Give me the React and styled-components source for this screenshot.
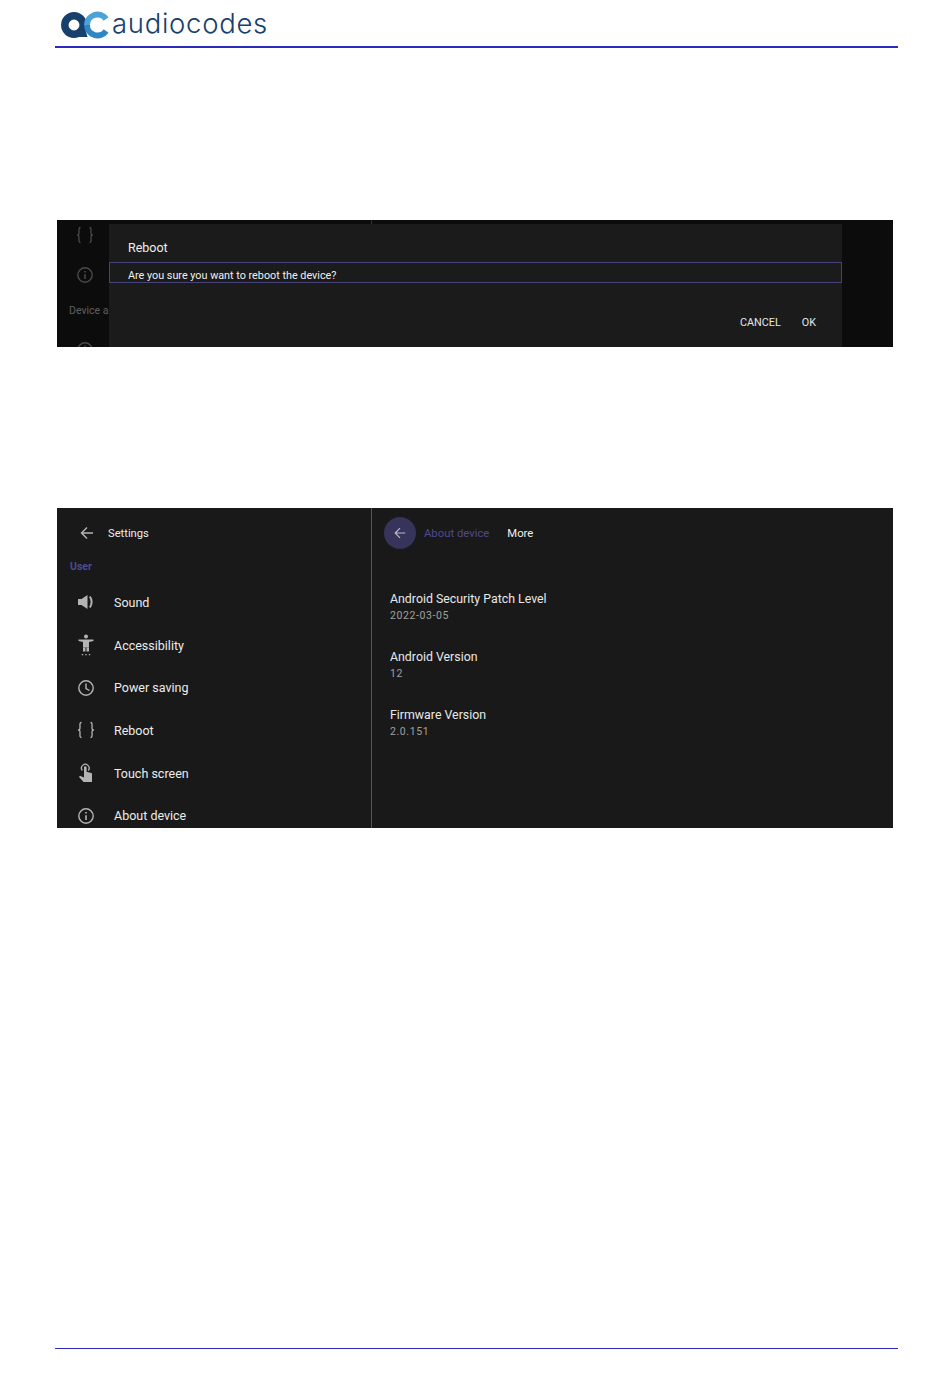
import React from "react";
import styled, { createGlobalStyle } from "styled-components";

const GlobalStyle = createGlobalStyle`
  html, body {
    margin: 0;
    padding: 0;
    background: #fff;
  }
  body {
    font-family: Roboto, "Liberation Sans", sans-serif;
  }
`;

const Page = styled.div`
  width: 950px;
  height: 1378px;
  display: flex;
  flex-direction: column;
  overflow: hidden;
`;

const Header = styled.header`
  height: 48px;
  margin: 0 52px 0 55px;
  padding: 0 0 0 6px;
  box-sizing: border-box;
  border-bottom: 2px solid #2a2ac0;
  display: flex;
  align-items: flex-start;
  gap: 3px;
`;

const LogoMark = styled.svg`
  width: 48px;
  height: 28px;
  margin-top: 11px;
  flex: none;
`;

const LogoText = styled.span`
  font-family: Inter, sans-serif;
  font-weight: 300;
  font-size: 27.5px;
  letter-spacing: 0.7px;
  line-height: 24px;
  margin-top: 11px;
  color: #17406d;
`;

const Shot = styled.section`
  width: 836px;
  margin: ${(p) => p.$top}px 0 0 57px;
  height: ${(p) => p.$height}px;
  background: ${(p) => (p.$dim ? "#0c0c0c" : "#191919")};
  color: #e8e8e8;
  display: flex;
  overflow: hidden;
`;

const Backdrop = styled.div`
  flex: none;
  width: ${(p) => p.$width}px;
  background: #0c0c0c;
`;

const DimColumn = styled.div`
  height: 100%;
  display: flex;
  flex-direction: column;
  align-items: flex-start;
  padding-left: 12px;
  box-sizing: border-box;
`;

const DimIcon = styled.div`
  width: 32px;
  margin-top: ${(p) => p.$top}px;
  display: flex;
  justify-content: center;
  color: #4a4a4a;
`;

const DimLabel = styled.div`
  font-size: 10.5px;
  line-height: 12px;
  margin-top: 21px;
  white-space: nowrap;
  color: #606060;
`;

const Dialog = styled.div`
  flex: none;
  width: 733px;
  display: flex;
  flex-direction: column;
  margin-top: 4px;
  background: #1b1b1b;
  position: relative;

  &::before {
    content: "";
    position: absolute;
    top: -4px;
    left: 262px;
    width: 1px;
    height: 4px;
    background: #333;
  }
`;

const DialogTitle = styled.div`
  font-size: 12.5px;
  line-height: 16px;
  margin: 16px 0 0 19px;
  color: #eee;
`;

const FocusRow = styled.div`
  height: 21px;
  margin-top: 6px;
  box-sizing: border-box;
  border: 1px solid #46437a;
  padding: 6px 0 0 18px;
  font-size: 10.8px;
  line-height: 13px;
  color: #f0f0f0;
  white-space: nowrap;
  overflow: hidden;
`;

const DialogActions = styled.div`
  display: flex;
  justify-content: flex-end;
  gap: 21px;
  padding-right: 26px;
  margin-top: 33px;
`;

const ActionButton = styled.span`
  font-size: 10.8px;
  line-height: 13px;
  color: #e6e6e6;
`;

const Sidebar = styled.aside`
  flex: none;
  width: 315px;
  height: 100%;
  box-sizing: border-box;
  border-right: 1px solid #555;
`;

const SidebarTop = styled.div`
  height: 52px;
  display: flex;
  align-items: center;
  padding: 0 0 2px 22px;
  box-sizing: border-box;
  gap: 13px;
  font-size: 11.2px;
  color: #ededed;

  svg {
    color: #b4b4b4;
  }
`;

const Section = styled.div`
  font-size: 10.5px;
  font-weight: 700;
  line-height: 14px;
  padding-left: 13px;
  margin-bottom: 7px;
  color: #4f4a8f;
`;

const Item = styled.div`
  height: 42.7px;
  display: flex;
  align-items: center;
  font-size: 12.5px;
  color: #ececec;
`;

const ItemIcon = styled.div`
  width: 57px;
  padding-left: 20px;
  box-sizing: border-box;
  display: flex;
  color: #b4b4b4;
  flex: none;
`;

const Content = styled.main`
  flex: 1;
  padding: 9px 0 0 12px;
`;

const Crumbs = styled.div`
  display: flex;
  align-items: center;
  font-size: 11.3px;
`;

const BackCircle = styled.div`
  width: 32px;
  height: 32px;
  border-radius: 50%;
  background: #36345a;
  color: #b8b8c8;
  display: flex;
  align-items: center;
  justify-content: center;
  margin-right: 8px;
`;

const Crumb = styled.span`
  color: ${(p) => (p.$active ? "#eee" : "#4f4a8f")};
  margin-right: 18px;
`;

const InfoList = styled.div`
  margin: 42px 0 0 6px;
  display: flex;
  flex-direction: column;
  gap: 26px;
`;

const InfoBlock = styled.div`
  display: flex;
  flex-direction: column;
`;

const InfoLabel = styled.div`
  font-size: 12.35px;
  line-height: 17px;
  color: #e8e8e8;
`;

const InfoValue = styled.div`
  font-size: 10.5px;
  line-height: 15px;
  letter-spacing: 0.6px;
  color: #a0a0a0;
`;

const Footer = styled.div`
  margin: auto 52px 29px 55px;
  border-top: 1px solid #2a2ac0;
`;

const Arrow = ({ size = 16 }) => (
  <svg width={size} height={size} viewBox="0 0 16 16" fill="none" stroke="currentColor" strokeWidth="1.4">
    <path d="M14 8H2.5M8 2.5L2.5 8L8 13.5" />
  </svg>
);

const SoundIcon = () => (
  <svg width="18" height="18" viewBox="0 0 18 18" fill="currentColor">
    <path d="M1 6h3.500L10.500 2v14l-6-4H1z" />
    <path d="M12.800 3.500c2.400 3 2.400 8 0 11" fill="none" stroke="currentColor" strokeWidth="2" />
  </svg>
);

const PersonIcon = () => (
  <svg width="18" height="22" viewBox="0 0 18 22" fill="currentColor">
    <circle cx="9" cy="2.600" r="2" />
    <path d="M1.500 5.400h15v1.700L12 8v5.500H6V8L1.500 7.100z" />
    <path d="M6 13.500h2.500v4H6zM9.500 13.500H12v4H9.500z" />
    <path d="M4.800 20h1.400v1.200H4.800zM8.300 20h1.400v1.200H8.300zM11.800 20h1.400v1.200h-1.400z" />
  </svg>
);

const ClockIcon = () => (
  <svg width="18" height="18" viewBox="0 0 18 18" fill="none" stroke="currentColor" strokeWidth="1.400">
    <circle cx="9" cy="9" r="7.200" />
    <path d="M9 4.500V9.500L12.500 11.500" />
  </svg>
);

const BracesIcon = () => (
  <svg width="18" height="18" viewBox="0 0 18 18" fill="none" stroke="currentColor" strokeWidth="1.300">
    <path d="M4.500 1.500C2.500 1.500 3 3.500 3 6S2.800 8.600 1.200 9C2.800 9.400 3 9.500 3 12s-.5 4.500 1.500 4.500" />
    <path d="M13.500 1.500c2 0 1.500 2 1.500 4.500s.2 2.600 1.800 3c-1.600.4-1.800.5-1.800 3s.5 4.500-1.500 4.500" />
  </svg>
);

const TouchIcon = () => (
  <svg width="18" height="20" viewBox="0 0 18 20" fill="currentColor">
    <path d="M7 4.500a1.300 1.300 0 0 1 2.600 0v4.200l5.400 1.600V19H6.500L2 14l1-1.200L7 14.500z" />
    <path d="M5.300 7.500a3.800 3.800 0 1 1 6 0" fill="none" stroke="currentColor" strokeWidth="1.300" />
  </svg>
);

const InfoIcon = () => (
  <svg width="18" height="18" viewBox="0 0 18 18" fill="none" stroke="currentColor" strokeWidth="1.400">
    <circle cx="9" cy="9" r="7.200" />
    <path d="M9 8.200v4.800" strokeWidth="1.600" />
    <path d="M9 5v1.500" strokeWidth="1.600" />
  </svg>
);

const items = [
  { label: "Sound", icon: <SoundIcon /> },
  { label: "Accessibility", icon: <PersonIcon /> },
  { label: "Power saving", icon: <ClockIcon /> },
  { label: "Reboot", icon: <BracesIcon /> },
  { label: "Touch screen", icon: <TouchIcon /> },
  { label: "About device", icon: <InfoIcon /> },
];

const details = [
  { label: "Android Security Patch Level", value: "2022-03-05" },
  { label: "Android Version", value: "12" },
  { label: "Firmware Version", value: "2.0.151" },
];

function App() {
  return (
    <Page>
      <GlobalStyle />
      <Header>
        <LogoMark viewBox="0 0 48 28">
          <circle cx="13" cy="14" r="9.200" fill="none" stroke="#17406d" strokeWidth="7.500" />
          <path d="M20 4L26.500 26H18z" fill="#17406d" />
          <path d="M45.100 8A10.500 10.500 0 0 0 26 14" fill="none" stroke="#4ba3d8" strokeWidth="6" />
          <path d="M26 14A10.500 10.500 0 0 0 45.100 20" fill="none" stroke="#2f86c4" strokeWidth="6" />
        </LogoMark>
        <LogoText>audiocodes</LogoText>
      </Header>

      <Shot $top={172} $height={127} $dim>
        <Backdrop $width={52}>
          <DimColumn>
            <DimIcon $top={6}><BracesIcon /></DimIcon>
            <DimIcon $top={22}><InfoIcon /></DimIcon>
            <DimLabel>Device a</DimLabel>
            <DimIcon $top={24}><ClockIcon /></DimIcon>
          </DimColumn>
        </Backdrop>
        <Dialog>
          <DialogTitle>Reboot</DialogTitle>
          <FocusRow>Are you sure you want to reboot the device?</FocusRow>
          <DialogActions>
            <ActionButton>CANCEL</ActionButton>
            <ActionButton>OK</ActionButton>
          </DialogActions>
        </Dialog>
        <Backdrop $width={51} />
      </Shot>

      <Shot $top={161} $height={320}>
        <Sidebar>
          <SidebarTop>
            <Arrow />
            <span>Settings</span>
          </SidebarTop>
          <Section>User</Section>
          {items.map((item) => (
            <Item key={item.label}>
              <ItemIcon>{item.icon}</ItemIcon>
              {item.label}
            </Item>
          ))}
        </Sidebar>
        <Content>
          <Crumbs>
            <BackCircle>
              <Arrow size={14} />
            </BackCircle>
            <Crumb>About device</Crumb>
            <Crumb $active>More</Crumb>
          </Crumbs>
          <InfoList>
            {details.map((d) => (
              <InfoBlock key={d.label}>
                <InfoLabel>{d.label}</InfoLabel>
                <InfoValue>{d.value}</InfoValue>
              </InfoBlock>
            ))}
          </InfoList>
        </Content>
      </Shot>

      <Footer />
    </Page>
  );
}

export default App;
